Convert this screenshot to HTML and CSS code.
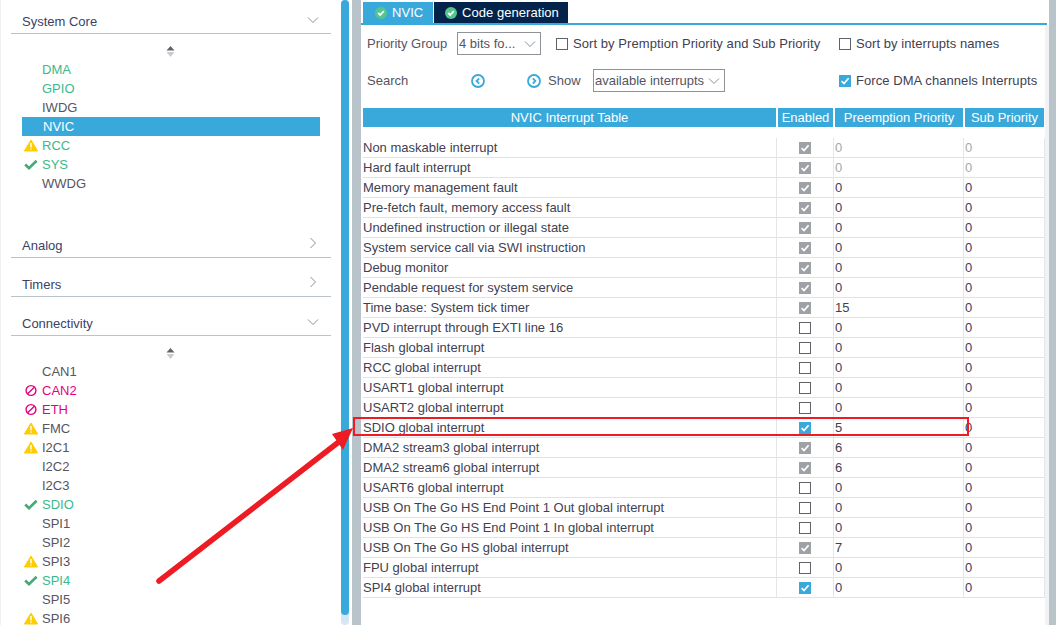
FILE: index.html
```html
<!DOCTYPE html>
<html lang="en">
<head>
<meta charset="utf-8">
<title>NVIC</title>
<link rel="stylesheet" href="styles.css">
</head>
<body>
<svg class="defs" width="0" height="0" aria-hidden="true">
  <symbol id="warn" viewBox="0 0 14 12"><path d="M7 .5 13.6 11.5H.4Z" fill="#ffcc00" stroke="#ffcc00" stroke-linejoin="round"/><path d="M7 3.6V8" stroke="#fff" stroke-width="1.5"/><path d="M7 8.9v1.4" stroke="#fff" stroke-width="1.4"/></symbol>
  <symbol id="ok" viewBox="0 0 14 12"><path d="M1.2 6 5 9.6 12.6 2.2" fill="none" stroke="#45a971" stroke-width="2.6"/></symbol>
  <symbol id="ban" viewBox="0 0 14 14"><circle cx="7" cy="7" r="5.3" fill="none" stroke="#e6007e" stroke-width="1.5"/><path d="M3.4 10.6 10.6 3.4" stroke="#e6007e" stroke-width="1.5"/></symbol>
  <symbol id="down" viewBox="0 0 12 8"><path d="M1 1.5 6 6.5 11 1.5" fill="none" stroke="#8b9198" stroke-width="1"/></symbol>
  <symbol id="right" viewBox="0 0 8 12"><path d="M1.5 1 6.5 6 1.5 11" fill="none" stroke="#8b9198" stroke-width="1"/></symbol>
  <symbol id="sort" viewBox="0 0 9 11"><path d="M4.5 0 8.5 4.5H.5Z" fill="#5f6368"/><path d="M.5 6H8.5L4.5 11Z" fill="#c9cccf"/></symbol>
  <symbol id="tick" viewBox="0 0 12 12"><path d="M2.6 6.2 5 8.6 9.6 3.2" fill="none" stroke="#fff" stroke-width="1.7"/></symbol>
  <symbol id="tabok" viewBox="0 0 12 12"><circle cx="6" cy="6" r="6" fill="#55c58e"/><path d="M3.2 6 5.2 8 8.8 4.2" fill="none" stroke="#fff" stroke-width="1.8"/></symbol>
</svg>
<div class="page">
  <aside class="side">
    <div class="sec"><span>System Core</span><svg class="chev-d"><use href="#down"/></svg></div>
    <div class="sorter"><svg class="sort-ic"><use href="#sort"/></svg></div>
    <ul class="list">
      <li class="good"><i></i>DMA</li>
      <li class="good"><i></i>GPIO</li>
      <li><i></i>IWDG</li>
      <li class="sel"><i></i>NVIC</li>
      <li class="good"><svg class="ic"><use href="#warn"/></svg>RCC</li>
      <li class="good"><svg class="ic"><use href="#ok"/></svg>SYS</li>
      <li><i></i>WWDG</li>
    </ul>
    <div class="sec sec-first"><span>Analog</span><svg class="chev-r"><use href="#right"/></svg></div>
    <div class="sec sec-next"><span>Timers</span><svg class="chev-r"><use href="#right"/></svg></div>
    <div class="sec sec-next"><span>Connectivity</span><svg class="chev-d"><use href="#down"/></svg></div>
    <div class="sorter"><svg class="sort-ic"><use href="#sort"/></svg></div>
    <ul class="list">
      <li><i></i>CAN1</li>
      <li class="bad"><svg class="ic"><use href="#ban"/></svg>CAN2</li>
      <li class="bad"><svg class="ic"><use href="#ban"/></svg>ETH</li>
      <li><svg class="ic"><use href="#warn"/></svg>FMC</li>
      <li><svg class="ic"><use href="#warn"/></svg>I2C1</li>
      <li><i></i>I2C2</li>
      <li><i></i>I2C3</li>
      <li class="good"><svg class="ic"><use href="#ok"/></svg>SDIO</li>
      <li><i></i>SPI1</li>
      <li><i></i>SPI2</li>
      <li><svg class="ic"><use href="#warn"/></svg>SPI3</li>
      <li class="good"><svg class="ic"><use href="#ok"/></svg>SPI4</li>
      <li><i></i>SPI5</li>
      <li><svg class="ic"><use href="#warn"/></svg>SPI6</li>
    </ul>
  </aside>
  <div class="scroll"><div class="thumb"></div></div>
  <div class="rail"></div>
  <main class="main">
    <nav class="tabs">
      <div class="tab tab-on"><svg class="tab-ic"><use href="#tabok"/></svg>NVIC</div>
      <div class="tab tab-off"><svg class="tab-ic"><use href="#tabok"/></svg>Code generation</div>
    </nav>
    <div class="tools t1">
      <span class="lbl l-pg">Priority Group</span>
      <div class="select s1"><span>4 bits fo...</span><svg class="chev-d"><use href="#down"/></svg></div>
      <span class="cb c1"></span><span class="cap cap1">Sort by Premption Priority and Sub Priority</span>
      <span class="cb c2"></span><span class="cap">Sort by interrupts names</span>
    </div>
    <div class="tools t2">
      <span class="lbl l-s">Search</span>
      <svg class="nav" viewBox="0 0 14 14"><circle cx="7" cy="7" r="6" fill="none" stroke="#39a9dc" stroke-width="1.8"/><path d="M8.2 4.4 5.6 7l2.6 2.6" fill="none" stroke="#39a9dc" stroke-width="1.8"/></svg>
      <svg class="nav nav2" viewBox="0 0 14 14"><circle cx="7" cy="7" r="6" fill="none" stroke="#39a9dc" stroke-width="1.8"/><path d="M5.8 4.4 8.4 7 5.8 9.6" fill="none" stroke="#39a9dc" stroke-width="1.8"/></svg>
      <span class="lbl l-show">Show</span>
      <div class="select s2"><span>available interrupts</span><svg class="chev-d"><use href="#down"/></svg></div>
      <span class="cb on c3"><svg><use href="#tick"/></svg></span><span class="cap">Force DMA channels Interrupts</span>
    </div>
    <div class="thead"><div>NVIC Interrupt Table</div><div>Enabled</div><div>Preemption Priority</div><div>Sub Priority</div></div>
    <div class="tbody">
      <div class="row dim"><div>Non maskable interrupt</div><div><span class="cb grey"><svg><use href="#tick"/></svg></span></div><div>0</div><div>0</div></div>
      <div class="row dim"><div>Hard fault interrupt</div><div><span class="cb grey"><svg><use href="#tick"/></svg></span></div><div>0</div><div>0</div></div>
      <div class="row"><div>Memory management fault</div><div><span class="cb grey"><svg><use href="#tick"/></svg></span></div><div>0</div><div>0</div></div>
      <div class="row"><div>Pre-fetch fault, memory access fault</div><div><span class="cb grey"><svg><use href="#tick"/></svg></span></div><div>0</div><div>0</div></div>
      <div class="row"><div>Undefined instruction or illegal state</div><div><span class="cb grey"><svg><use href="#tick"/></svg></span></div><div>0</div><div>0</div></div>
      <div class="row"><div>System service call via SWI instruction</div><div><span class="cb grey"><svg><use href="#tick"/></svg></span></div><div>0</div><div>0</div></div>
      <div class="row"><div>Debug monitor</div><div><span class="cb grey"><svg><use href="#tick"/></svg></span></div><div>0</div><div>0</div></div>
      <div class="row"><div>Pendable request for system service</div><div><span class="cb grey"><svg><use href="#tick"/></svg></span></div><div>0</div><div>0</div></div>
      <div class="row"><div>Time base: System tick timer</div><div><span class="cb grey"><svg><use href="#tick"/></svg></span></div><div>15</div><div>0</div></div>
      <div class="row"><div>PVD interrupt through EXTI line 16</div><div><span class="cb"></span></div><div>0</div><div>0</div></div>
      <div class="row"><div>Flash global interrupt</div><div><span class="cb"></span></div><div>0</div><div>0</div></div>
      <div class="row"><div>RCC global interrupt</div><div><span class="cb"></span></div><div>0</div><div>0</div></div>
      <div class="row"><div>USART1 global interrupt</div><div><span class="cb"></span></div><div>0</div><div>0</div></div>
      <div class="row"><div>USART2 global interrupt</div><div><span class="cb"></span></div><div>0</div><div>0</div></div>
      <div class="row"><div>SDIO global interrupt</div><div><span class="cb on"><svg><use href="#tick"/></svg></span></div><div>5</div><div>0</div></div>
      <div class="row"><div>DMA2 stream3 global interrupt</div><div><span class="cb grey"><svg><use href="#tick"/></svg></span></div><div>6</div><div>0</div></div>
      <div class="row"><div>DMA2 stream6 global interrupt</div><div><span class="cb grey"><svg><use href="#tick"/></svg></span></div><div>6</div><div>0</div></div>
      <div class="row"><div>USART6 global interrupt</div><div><span class="cb"></span></div><div>0</div><div>0</div></div>
      <div class="row"><div>USB On The Go HS End Point 1 Out global interrupt</div><div><span class="cb"></span></div><div>0</div><div>0</div></div>
      <div class="row"><div>USB On The Go HS End Point 1 In global interrupt</div><div><span class="cb"></span></div><div>0</div><div>0</div></div>
      <div class="row"><div>USB On The Go HS global interrupt</div><div><span class="cb grey"><svg><use href="#tick"/></svg></span></div><div>7</div><div>0</div></div>
      <div class="row"><div>FPU global interrupt</div><div><span class="cb"></span></div><div>0</div><div>0</div></div>
      <div class="row"><div>SPI4 global interrupt</div><div><span class="cb on"><svg><use href="#tick"/></svg></span></div><div>0</div><div>0</div></div>
    </div>
  </main>
  <div class="strip"></div>
  <div class="rail rail2"></div>
  <svg class="markup" viewBox="0 0 1063 625" width="1063" height="625" aria-hidden="true">
    <rect x="354" y="418" width="614" height="17" fill="none" stroke="#ed1c24" stroke-width="2"/>
    <path d="M159 581 340 441" stroke="#ed1c24" stroke-width="5.5" stroke-linecap="round"/>
    <path d="M353 428 332 434 343 450Z" fill="#ed1c24"/>
  </svg>
</div>
</body>
</html>
```
FILE: styles.css
```css
* { box-sizing: border-box; }
html, body { margin: 0; padding: 0; }
body { background: #fff; font-family: "Liberation Sans", Arial, sans-serif; font-size: 13px; color: #3f4152; }
.defs { position: absolute; }
.page { position: relative; display: flex; width: 1063px; height: 625px; overflow: hidden; }

.side { width: 341px; height: 625px; flex: none; overflow: hidden; border-left: 1px solid #f0f0f0; padding-left: 10px; }
.sec { width: 320px; height: 34px; display: flex; align-items: flex-end; justify-content: space-between; padding: 0 11px 4px; border-bottom: 1px solid #b9c3c9; font-size: 13px; color: #3a3f66; }
.sec-first { margin-top: 31px; }
.sec-next { height: 39px; }
.chev-d { width: 12px; height: 8px; flex: none; margin: 0 1px 5px 0; }
.chev-r { width: 8px; height: 12px; flex: none; margin: 0 3px 4px 0; }
.sorter { height: 26px; padding: 12px 0 0 155px; }
.sort-ic { display: block; width: 9px; height: 11px; }
.list { list-style: none; margin: 0; padding: 0 0 0 11px; }
.list li { display: flex; align-items: center; width: 298px; height: 19px; color: #55555f; }
.list li i { display: block; width: 20px; flex: none; }
.list .good { color: #3cb98a; }
.list .bad { color: #e6007e; }
.list .sel { background: #39a9dc; color: #fff; padding-left: 1px; }
.ic { width: 14px; height: 13px; margin: 0 4px 0 2px; flex: none; }

.scroll { width: 8px; height: 625px; flex: none; background: #d6e6f5; border-radius: 4px; }
.thumb { height: 615px; background: #39a9dc; border-radius: 4px; }
.rail { width: 9px; height: 625px; margin-left: 3px; flex: none; background: #b8c3ca; }

.main { width: 684px; flex: none; padding-left: 2px; }
.tabs { display: flex; gap: 1px; width: 686px; margin-left: -2px; padding: 2px 0 0 2px; border-bottom: 2px solid #39a9dc; height: 25px; }
.tab { height: 21px; display: flex; align-items: center; color: #fff; letter-spacing: .05px; }
.tab-on { width: 70px; padding-left: 12px; background: #39a9dc; }
.tab-off { width: 134px; padding-left: 11px; background: #03234b; }
.tab-ic { width: 12px; height: 12px; margin-right: 5px; flex: none; }

.tools { display: flex; align-items: center; height: 23px; }
.t1 { margin-top: 7px; }
.t2 { margin-top: 14px; }
.lbl { color: #55555f; }
.l-pg { width: 90px; margin-left: 4px; }
.l-s { width: 104px; margin-left: 4px; }
.l-show { width: 45px; margin-left: 7px; }
.select { height: 23px; border: 1px solid #8f9296; display: flex; align-items: center; justify-content: space-between; padding: 0 4px 0 1px; color: #55555f; }
.select .chev-d { margin: 0; }
.s1 { width: 84px; margin-right: 15px; }
.s2 { width: 132px; margin-right: 114px; }
.cap { margin-left: 5px; color: #3f4152; letter-spacing: .07px; }
.cap1 { width: 266px; }
.cb { display: inline-block; width: 12px; height: 12px; border: 1px solid #5f6368; flex: none; }
.cb svg { display: block; width: 12px; height: 12px; }
.cb.on { background: #39a9dc; border: 0; }
.cb.grey { background: #9ea2a6; border: 0; }
.nav { width: 14px; height: 14px; flex: none; }
.nav2 { margin-left: 42px; }

.thead { display: grid; grid-template-columns: 413px 55px 128px 79px; column-gap: 2px; height: 19px; margin-top: 16px; }
.thead div { background: #39a9dc; color: #fff; display: flex; align-items: center; justify-content: center; }
.tbody { margin-top: 11px; }
.row { display: grid; grid-template-columns: 413px 57px 130px 82px; height: 20px; margin-right: -1px; }
.row > div { display: flex; align-items: center; height: 20px; border-bottom: 1px solid #dfe3e6; }
.row > div:nth-child(n+2) { border-left: 1px solid #e4e7ea; }
.row > div:nth-child(2) { justify-content: center; }
.row > div:nth-child(n+3) { padding-left: 1px; }
.row > div:last-child { border-right: 1px solid #e4e7ea; }
.dim > div:nth-child(n+3) { color: #a5a8ab; }

.strip { width: 4px; height: 600px; margin-top: 25px; flex: none; background: #f0f2f4; }
.rail2 { width: 7px; margin-left: 0; }
.markup { position: absolute; left: 0; top: 0; pointer-events: none; }
```
